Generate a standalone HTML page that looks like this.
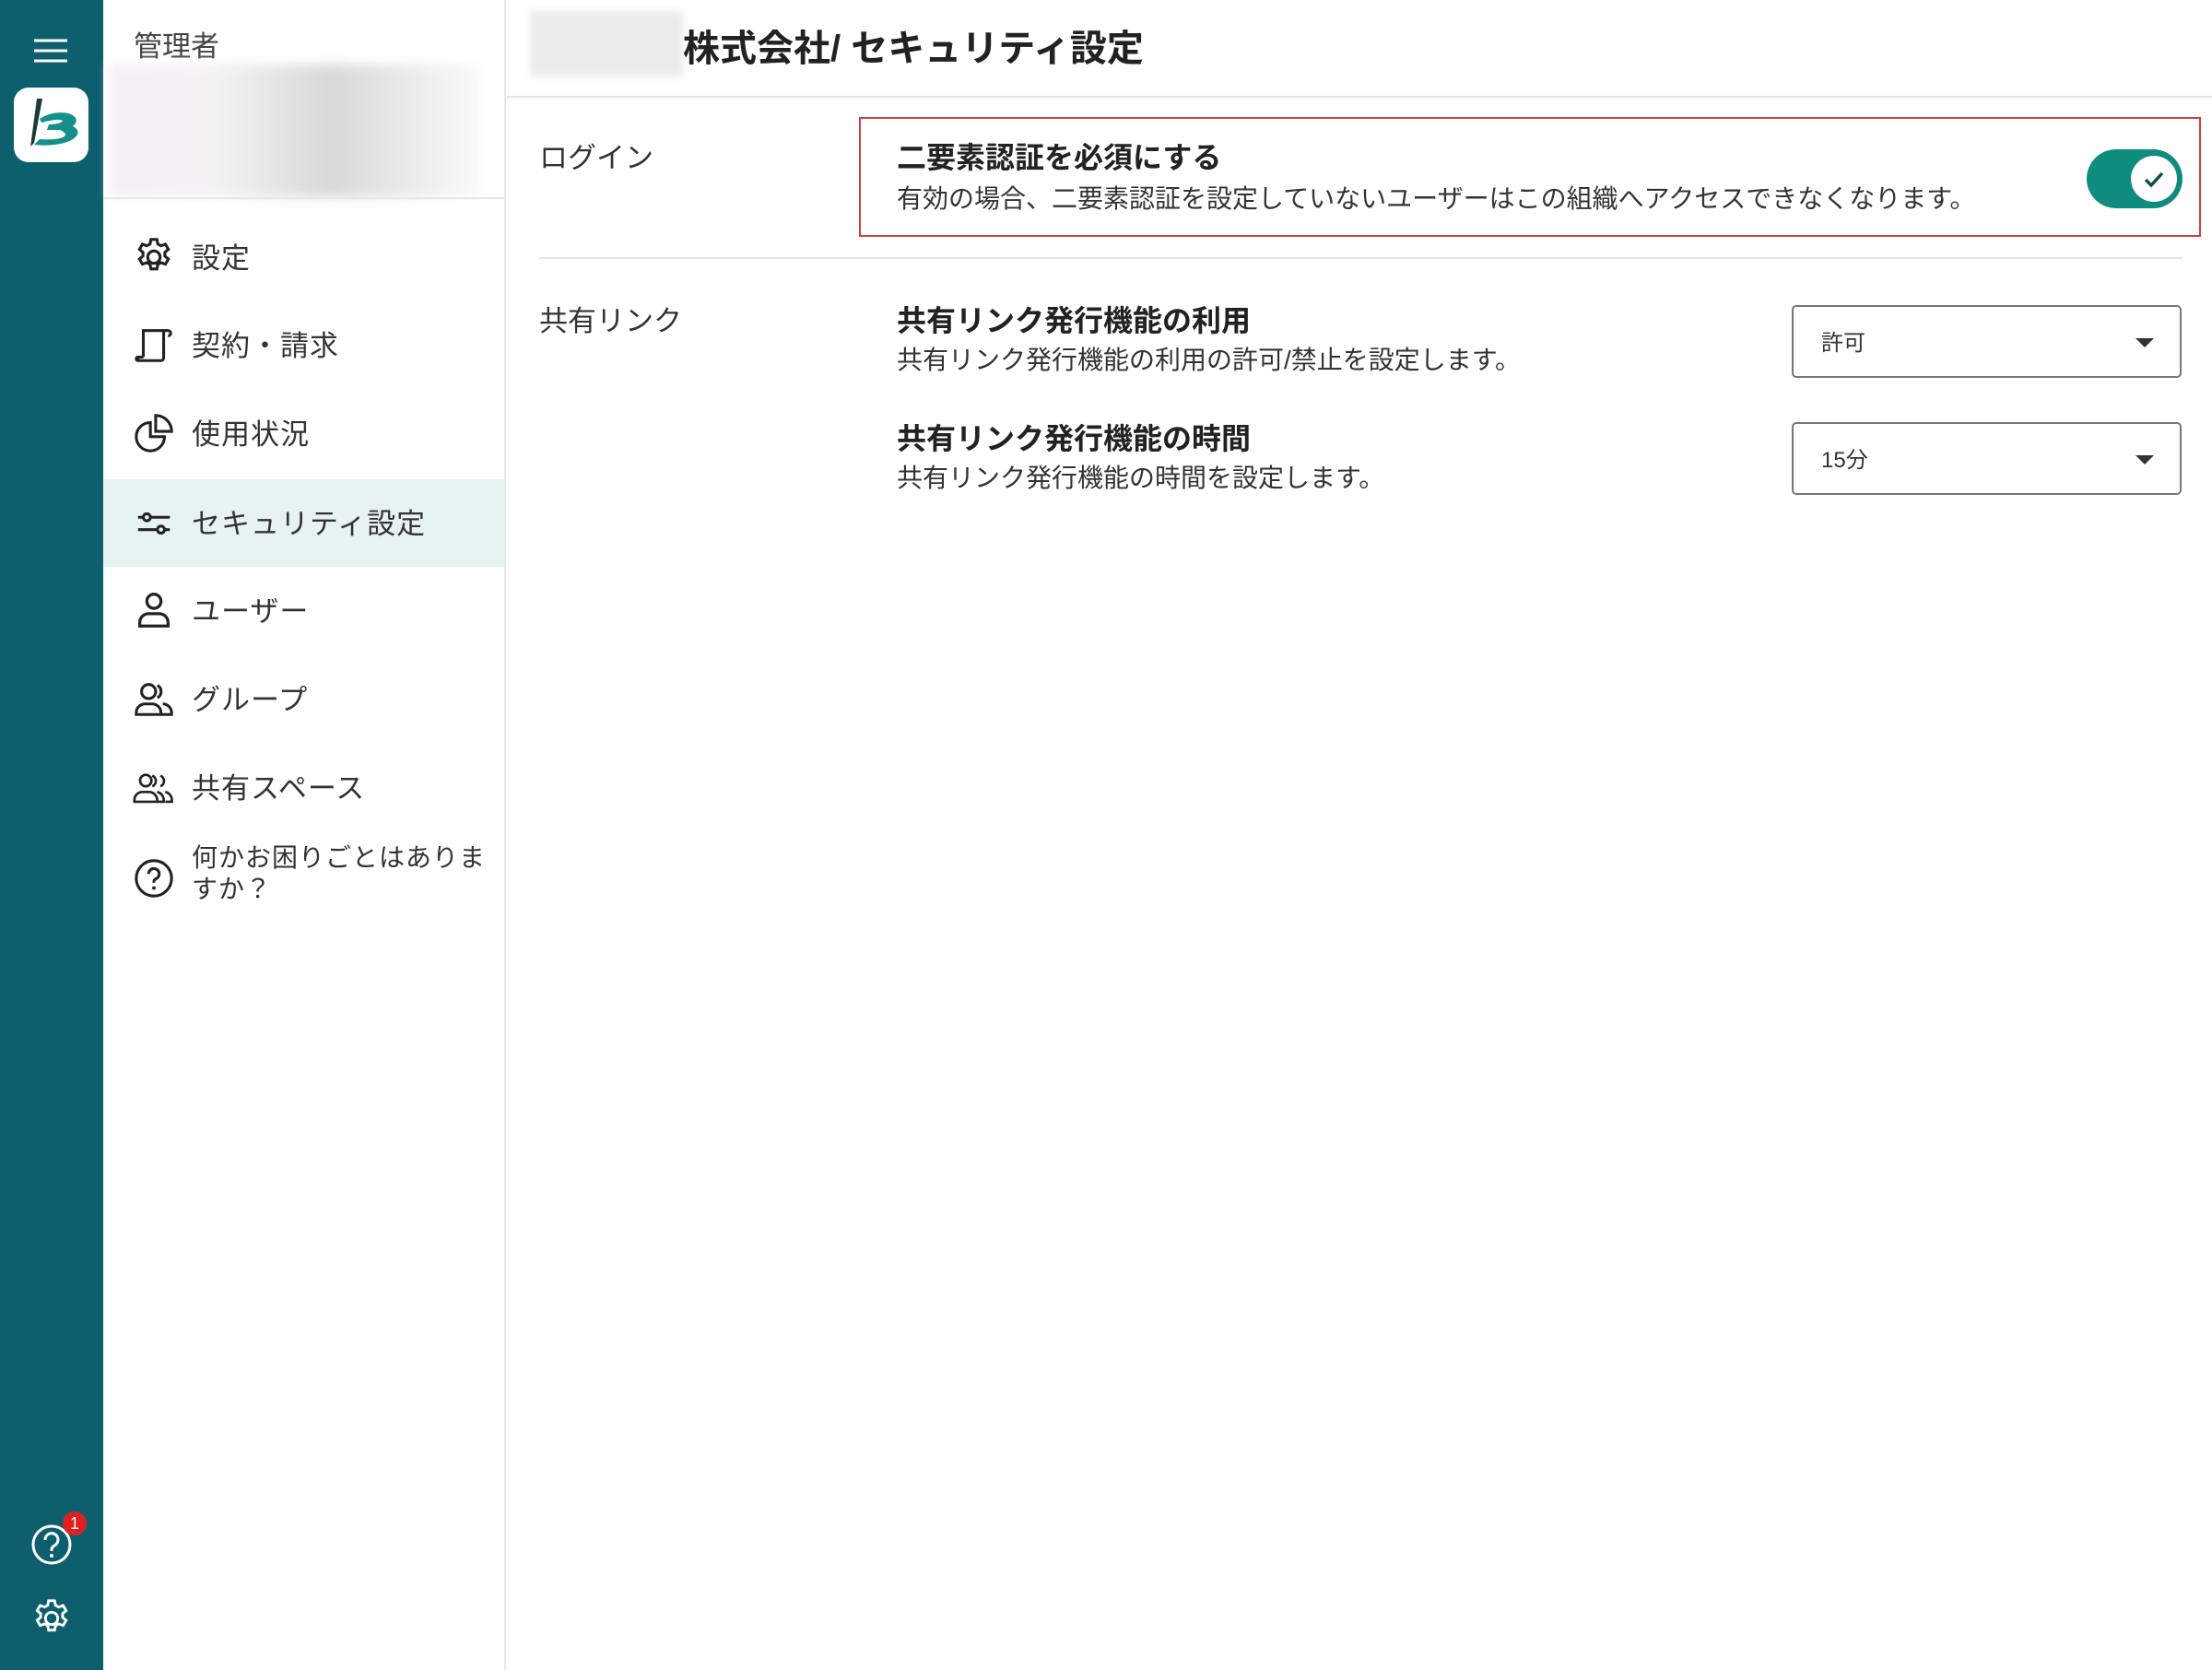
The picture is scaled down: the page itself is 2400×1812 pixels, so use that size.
<!DOCTYPE html>
<html><head><meta charset="utf-8"><style>
*{margin:0;padding:0;box-sizing:border-box}
body{width:2400px;height:1812px;background:#fff;font-family:"Liberation Sans","Noto Sans CJK JP",sans-serif;color:#333;position:relative;overflow:hidden}
.a{position:absolute;white-space:nowrap}
.rail{position:absolute;left:0;top:0;width:112px;height:1812px;background:#0d5f6e}
.side{position:absolute;left:112px;top:0;width:437px;height:1812px;border-right:2px solid #e8e8e8}
.mi{position:absolute;left:0;width:435px;height:95px}
.mt{position:absolute;left:96px;font-size:31px;color:#333;letter-spacing:1px}
.ic{position:absolute;left:32px;width:46px;height:46px}
.bt{font-weight:bold;font-size:32px;color:#222}
.ds{font-size:28px;color:#333}
.sel{position:absolute;left:1944px;width:423px;height:79px;border:2px solid #777;border-radius:5px}
.sel span{position:absolute;left:30px;top:19px;font-size:24px;color:#333}
.sel i{position:absolute;right:28px;top:34px;border-left:10px solid transparent;border-right:10px solid transparent;border-top:10px solid #333}
</style></head><body>
<div class="rail">
<svg class="a" style="left:36px;top:42px" width="38" height="26"><g stroke="#fff" stroke-width="3"><line x1="1" y1="2" x2="37" y2="2"/><line x1="1" y1="13" x2="37" y2="13"/><line x1="1" y1="24" x2="37" y2="24"/></g></svg>
<div class="a" style="left:15px;top:95px;width:81px;height:81px;background:#fff;border-radius:16px"></div>
<svg class="a" style="left:15px;top:95px" width="81" height="81" viewBox="0 0 81 81"><path d="M25 12 L31 12 L22 60 L18 64 Z" fill="#1c3a3a"/><path d="M28 34 C50 20 78 30 64 42 C80 50 60 66 22 62 L28 56 C52 58 64 52 50 46 L36 46 L38 40 C58 40 60 30 30 38 Z" fill="#14908a"/></svg>
<svg class="a" style="left:33px;top:1653px" width="46" height="46" viewBox="0 0 46 46"><circle cx="23" cy="23" r="20" fill="none" stroke="#fff" stroke-width="3"/><path d="M16 18 a7 7 0 1 1 10 6 c-3 2-3 3-3 6" fill="none" stroke="#fff" stroke-width="3"/><circle cx="23" cy="35" r="2" fill="#fff"/></svg>
<div class="a" style="left:68px;top:1640px;width:26px;height:26px;border-radius:50%;background:#e02020;color:#fff;font-size:18px;text-align:center;line-height:26px">1</div>
<svg class="a" style="left:33px;top:1733px" width="46" height="46" viewBox="0 0 24 24"><path fill="none" stroke="#fff" stroke-width="1.5" d="M12 8.5a3.5 3.5 0 1 0 0 7a3.5 3.5 0 1 0 0-7zM10.3 2h3.4l.5 2.6 1.8 1 2.5-.9 1.7 2.9-2 1.7v2.1l2 1.7-1.7 2.9-2.5-.9-1.8 1-.5 2.6h-3.4l-.5-2.6-1.8-1-2.5.9-1.7-2.9 2-1.7V9.3l-2-1.7 1.7-2.9 2.5.9 1.8-1z"/></svg>
</div>
<div class="side">
<div class="a" style="left:33px;top:25px;font-size:31px;color:#444">管理者</div>
<div class="a" style="left:7px;top:70px;width:401px;height:144px;background:linear-gradient(90deg,#f6eef5,#f2f2f2 30%,#d8d8d8 60%,#eee 85%,#f8fafa);filter:blur(6px)"></div>
<div class="a" style="left:0;top:214px;width:435px;height:2px;background:#e6e6e6"></div>
<div class="mi" style="top:231px"><svg class="ic" style="top:25px" viewBox="0 0 24 24"><path fill="none" stroke="#222" stroke-width="1.6" d="M12 8.5a3.5 3.5 0 1 0 0 7a3.5 3.5 0 1 0 0-7zM10.3 2h3.4l.5 2.6 1.8 1 2.5-.9 1.7 2.9-2 1.7v2.1l2 1.7-1.7 2.9-2.5-.9-1.8 1-.5 2.6h-3.4l-.5-2.6-1.8-1-2.5.9-1.7-2.9 2-1.7V9.3l-2-1.7 1.7-2.9 2.5.9 1.8-1z"/></svg><div class="mt" style="top:24px">設定</div></div>
<div class="mi" style="top:326px"><svg class="ic" style="top:25px" viewBox="0 0 24 24"><path fill="none" stroke="#222" stroke-width="1.6" d="M6 19V4h14M20 4a1.5 1.5 0 0 1 0 3M6 19H3v2h13a1.5 1.5 0 0 0 1.5-1.5V4M3 19a1 1 0 0 0 0 2"/></svg><div class="mt" style="top:24px">契約・請求</div></div>
<div class="mi" style="top:421px"><svg class="ic" style="top:26px" viewBox="0 0 24 24"><path fill="none" stroke="#222" stroke-width="1.6" d="M10 6a8 8 0 1 0 8 8h-8zM13 2v9h9a9 9 0 0 0-9-9z"/></svg><div class="mt" style="top:25px">使用状況</div></div>
<div class="mi" style="top:520px;background:#e6f3f1"><svg class="ic" style="top:24px" viewBox="0 0 24 24"><g fill="none" stroke="#222" stroke-width="1.6"><line x1="3" y1="9" x2="21" y2="9"/><line x1="3" y1="16" x2="21" y2="16"/><circle cx="8" cy="9" r="2" fill="#e6f3f1"/><circle cx="16" cy="16" r="2" fill="#e6f3f1"/></g></svg><div class="mt" style="top:23px">セキュリティ設定</div></div>
<div class="mi" style="top:614px"><svg class="ic" style="top:25px" viewBox="0 0 24 24"><g fill="none" stroke="#222" stroke-width="1.7"><circle cx="12" cy="7" r="4"/><path d="M4 21v-2a5 5 0 0 1 5-5h6a5 5 0 0 1 5 5v2z"/></g></svg><div class="mt" style="top:24px">ユーザー</div></div>
<div class="mi" style="top:710px"><svg class="ic" style="top:25px" viewBox="0 0 24 24"><g fill="none" stroke="#222" stroke-width="1.6"><circle cx="9" cy="8" r="4"/><path d="M2 21v-1a5 5 0 0 1 5-5h4a5 5 0 0 1 5 5v1zM14 4.5a4 4 0 0 1 0 7M17 15a5 5 0 0 1 5 5v1h-6"/></g></svg><div class="mt" style="top:24px">グループ</div></div>
<div class="mi" style="top:806px"><svg class="ic" style="top:25px" viewBox="0 0 26 24"><g fill="none" stroke="#222" stroke-width="1.5"><circle cx="8" cy="8" r="3.5"/><path d="M1 21v-1a5 5 0 0 1 5-5h4a5 5 0 0 1 5 5v1zM12 5a3.5 3.5 0 0 1 0 6.5M15 15a5 5 0 0 1 4 5v1h-4M17 5a3.5 3.5 0 0 1 0 6.5M20 15a5 5 0 0 1 4 5v1h-4"/></g></svg><div class="mt" style="top:24px">共有スペース</div></div>
<div class="mi" style="top:900px;height:110px"><svg class="ic" style="top:30px" viewBox="0 0 24 24"><circle cx="12" cy="12" r="10" fill="none" stroke="#222" stroke-width="1.6"/><path d="M9 9.5a3 3 0 1 1 4 2.8c-1 .5-1 1.2-1 2.2" fill="none" stroke="#222" stroke-width="1.6"/><circle cx="12" cy="17.5" r="1" fill="#222"/></svg><div class="mt" style="top:14px;font-size:28px;line-height:34px;white-space:normal;width:320px">何かお困りごとはありますか？</div></div>
</div>
<div class="a" style="left:575px;top:12px;width:166px;height:71px;background:#ececec;filter:blur(4px)"></div>
<div class="a" style="left:741px;top:20px;font-size:40px;font-weight:bold;color:#222">株式会社/ セキュリティ設定</div>
<div class="a" style="left:550px;top:104px;width:1850px;height:2px;background:#e6e6e6"></div>
<div class="a" style="left:585px;top:146px;font-size:31px;color:#333">ログイン</div>
<div class="a" style="left:932px;top:127px;width:1456px;height:130px;border:2px solid #d04040"></div>
<div class="a bt" style="left:973px;top:146px">二要素認証を必須にする</div>
<div class="a ds" style="left:973px;top:194px">有効の場合、二要素認証を設定していないユーザーはこの組織へアクセスできなくなります。</div>
<div class="a" style="left:2264px;top:162px;width:104px;height:64px;border-radius:32px;background:#0e8c7e"></div>
<div class="a" style="left:2312px;top:169px;width:50px;height:50px;border-radius:50%;background:#fff"></div>
<svg class="a" style="left:2322px;top:179px" width="30" height="30" viewBox="0 0 30 30"><path d="M6 16l6 6 12-13" fill="none" stroke="#0d4f4a" stroke-width="3.5"/></svg>
<div class="a" style="left:585px;top:279px;width:1783px;height:2px;background:#e6e6e6"></div>
<div class="a" style="left:585px;top:323px;font-size:31px;color:#333">共有リンク</div>
<div class="a bt" style="left:973px;top:323px">共有リンク発行機能の利用</div>
<div class="a ds" style="left:973px;top:369px">共有リンク発行機能の利用の許可/禁止を設定します。</div>
<div class="sel" style="top:331px"><span>許可</span><i></i></div>
<div class="a bt" style="left:973px;top:451px">共有リンク発行機能の時間</div>
<div class="a ds" style="left:973px;top:497px">共有リンク発行機能の時間を設定します。</div>
<div class="sel" style="top:458px"><span>15分</span><i></i></div>
</body></html>
